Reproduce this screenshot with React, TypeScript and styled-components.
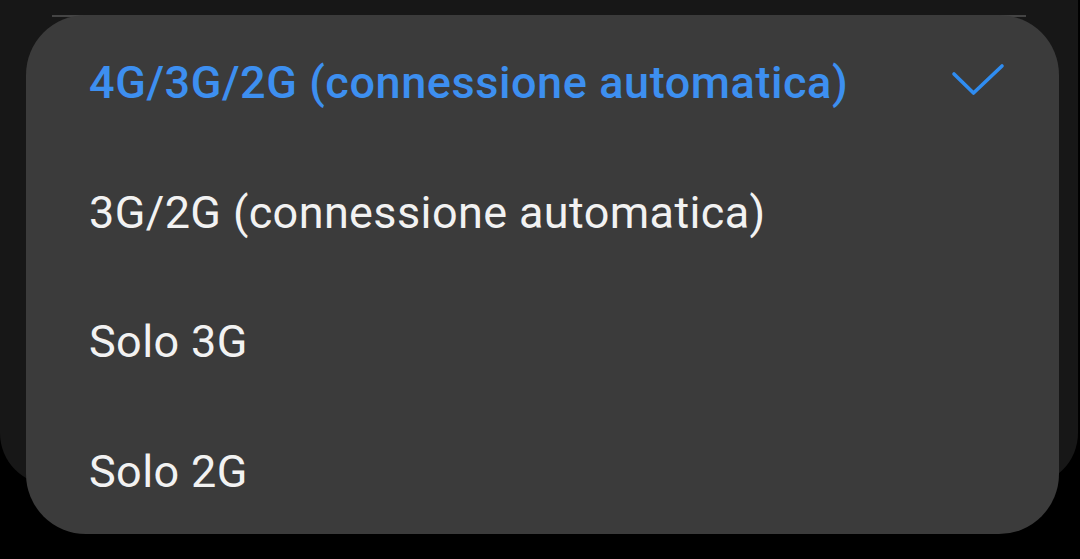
import React from 'react';
import styled, { createGlobalStyle } from 'styled-components';

const GlobalStyle = createGlobalStyle`
  html, body {
    margin: 0;
    padding: 0;
    background: #000;
  }
  body {
    width: 1080px;
    height: 559px;
    overflow: hidden;
    font-family: Roboto, "Noto Sans", "Liberation Sans", sans-serif;
  }
`;

const Screen = styled.div`
  position: relative;
  width: 1080px;
  height: 559px;
  background: #000;
`;

const Sheet = styled.div`
  width: 1078px;
  height: 485px;
  background: #171717;
  border-radius: 0 0 52px 52px;
  padding-top: 15px;
  box-sizing: border-box;
`;

const Divider = styled.div`
  margin: 0 52px 0 52px;
  height: 2px;
  background: #444;
`;

const Popup = styled.ul`
  position: absolute;
  left: 26px;
  top: 15px;
  width: 1033px;
  height: 519px;
  margin: 0;
  padding: 3px 0 0;
  box-sizing: border-box;
  list-style: none;
  background: #3b3b3b;
  border-radius: 60px;
  overflow: hidden;
`;

const Option = styled.li<{ $selected?: boolean }>`
  display: flex;
  align-items: center;
  justify-content: space-between;
  height: 129.5px;
  padding: 0 52px 0 63px;
  font-size: 45px;
  line-height: 129.5px;
  font-weight: ${(p) => (p.$selected ? 500 : 400)};
  letter-spacing: ${(p) => (p.$selected ? '0.58px' : '0.38px')};
  color: ${(p) => (p.$selected ? '#3d8ff0' : '#f2f2f2')};
  white-space: nowrap;
`;

const Check = () => (
  <svg width="56" height="40" viewBox="0 0 56 40" fill="none">
    <path
      d="M3 11 L22.5 30 L51 3"
      stroke="#2f8cf0"
      strokeWidth="3.6"
      strokeLinecap="round"
      strokeLinejoin="round"
    />
  </svg>
);

const options = [
  '4G/3G/2G (connessione automatica)',
  '3G/2G (connessione automatica)',
  'Solo 3G',
  'Solo 2G',
];

export default function App() {
  return (
    <>
      <GlobalStyle />
      <Screen>
        <Sheet>
          <Divider />
        </Sheet>
        <Popup>
          {options.map((o, i) => (
            <Option key={o} $selected={i === 0}>
              <span>{o}</span>
              {i === 0 && <Check />}
            </Option>
          ))}
        </Popup>
      </Screen>
    </>
  );
}
